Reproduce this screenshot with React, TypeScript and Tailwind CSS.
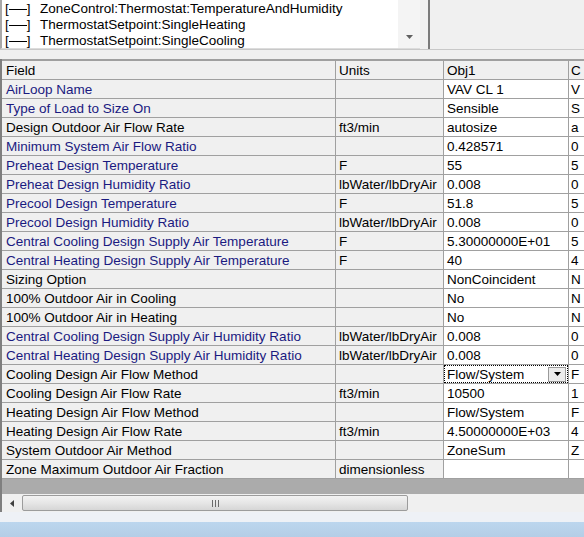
import React from "react";

type Row = { f: string; u: string; v: string; n: string; blue?: boolean; combo?: boolean };

const rows: Row[] = [
  { f: "AirLoop Name", u: "", v: "VAV CL 1", n: "V", blue: true },
  { f: "Type of Load to Size On", u: "", v: "Sensible", n: "S", blue: true },
  { f: "Design Outdoor Air Flow Rate", u: "ft3/min", v: "autosize", n: "a" },
  { f: "Minimum System Air Flow Ratio", u: "", v: "0.428571", n: "0", blue: true },
  { f: "Preheat Design Temperature", u: "F", v: "55", n: "5", blue: true },
  { f: "Preheat Design Humidity Ratio", u: "lbWater/lbDryAir", v: "0.008", n: "0", blue: true },
  { f: "Precool Design Temperature", u: "F", v: "51.8", n: "5", blue: true },
  { f: "Precool Design Humidity Ratio", u: "lbWater/lbDryAir", v: "0.008", n: "0", blue: true },
  { f: "Central Cooling Design Supply Air Temperature", u: "F", v: "5.30000000E+01", n: "5", blue: true },
  { f: "Central Heating Design Supply Air Temperature", u: "F", v: "40", n: "4", blue: true },
  { f: "Sizing Option", u: "", v: "NonCoincident", n: "N" },
  { f: "100% Outdoor Air in Cooling", u: "", v: "No", n: "N" },
  { f: "100% Outdoor Air in Heating", u: "", v: "No", n: "N" },
  { f: "Central Cooling Design Supply Air Humidity Ratio", u: "lbWater/lbDryAir", v: "0.008", n: "0", blue: true },
  { f: "Central Heating Design Supply Air Humidity Ratio", u: "lbWater/lbDryAir", v: "0.008", n: "0", blue: true },
  { f: "Cooling Design Air Flow Method", u: "", v: "Flow/System", n: "F", combo: true },
  { f: "Cooling Design Air Flow Rate", u: "ft3/min", v: "10500", n: "1" },
  { f: "Heating Design Air Flow Method", u: "", v: "Flow/System", n: "F" },
  { f: "Heating Design Air Flow Rate", u: "ft3/min", v: "4.50000000E+03", n: "4" },
  { f: "System Outdoor Air Method", u: "", v: "ZoneSum", n: "Z" },
  { f: "Zone Maximum Outdoor Air Fraction", u: "dimensionless", v: "", n: "" },
];

const listItems = [
  "ZoneControl:Thermostat:TemperatureAndHumidity",
  "ThermostatSetpoint:SingleHeating",
  "ThermostatSetpoint:SingleCooling",
];

export default function App() {
  return (
    <div
      className="w-[584px] h-[537px] overflow-hidden bg-[#f0f0f0] text-[13.5px] text-black relative"
      style={{ fontFamily: '"Liberation Sans", Arial, sans-serif' }}
    >
      {/* top area */}
      <div className="h-[49px] flex">
        <div className="w-[420px] h-[49px] flex bg-white border-l-2 border-[#a8a8a8] border-b border-b-[#dcdcdc]">
          <div className="flex-1 flex flex-col pt-[1px]">
            {listItems.map((t, i) => (
              <div key={i} className="h-[16px] leading-[16px] flex items-center pl-[3px]">
                <span className="w-[35px] flex items-center">
                  <span>[</span>
                  <span className="w-[18px] h-[1px] bg-black mt-[1px]" />
                  <span>]</span>
                </span>
                <span className="whitespace-nowrap">{t}</span>
              </div>
            ))}
          </div>
          <div className="w-[22px] bg-[#f4f4f4] flex items-end justify-center pb-[9px]">
            <svg width="7" height="4" viewBox="0 0 7 4">
              <polygon points="0,0 7,0 3.5,4" fill="#606060" />
            </svg>
          </div>
        </div>
        <div className="w-[8px]" />
        <div className="w-[2px] h-[49px] bg-[#7a7a7a]" />
        <div className="flex-1" />
      </div>
      <div className="h-[1px] bg-[#c8c8c8]" />
      <div className="h-[9px]" />

      {/* grid */}
      <div className="border-l-2 border-[#7f7f7f]">
        <div className="border-t-2 border-[#a0a0a0]">
          <div className="flex h-[19px] border-b border-[#a0a0a0] bg-[#f0f0f0]">
            <div className="w-[334px] shrink-0 border-r border-[#a0a0a0] pl-[4px] leading-[19px]">Field</div>
            <div className="w-[108px] shrink-0 border-r border-[#a0a0a0] pl-[3px] leading-[19px]">Units</div>
            <div className="w-[125px] shrink-0 border-r border-[#a0a0a0] pl-[3px] leading-[19px]">Obj1</div>
            <div className="flex-1 pl-[2px] leading-[19px]">C</div>
          </div>
          {rows.map((r, i) => (
            <div key={i} className="flex h-[19px] border-b border-[#a0a0a0]">
              <div
                className={`w-[334px] shrink-0 border-r border-[#a0a0a0] bg-[#f0f0f0] pl-[4px] leading-[19px] whitespace-nowrap ${r.blue ? "text-[#1a1a80]" : "text-black"}`}
              >
                {r.f}
              </div>
              <div className="w-[108px] shrink-0 border-r border-[#a0a0a0] bg-[#f0f0f0] pl-[3px] leading-[19px] whitespace-nowrap">
                {r.u}
              </div>
              {r.combo ? (
                <div className="w-[125px] shrink-0 border-r border-[#a0a0a0] bg-white relative">
                  <div className="absolute inset-0 border border-dotted border-black flex items-center">
                    <span className="pl-[2px] leading-[17px] flex-1">{r.v}</span>
                    <div className="w-[18px] h-[15px] mr-[1px] bg-[#ececec] border border-[#9a9a9a] flex items-center justify-center">
                      <svg width="7" height="4" viewBox="0 0 7 4">
                        <polygon points="0,0 7,0 3.5,4" fill="#000" />
                      </svg>
                    </div>
                  </div>
                </div>
              ) : (
                <div className="w-[125px] shrink-0 border-r border-[#a0a0a0] bg-white pl-[3px] leading-[19px] whitespace-nowrap">
                  {r.v}
                </div>
              )}
              <div className="flex-1 bg-white pl-[2px] leading-[19px] overflow-hidden">{r.n}</div>
            </div>
          ))}
          <div className="h-[15px] bg-[#ababab]" />
          {/* horizontal scrollbar */}
          <div className="h-[18px] flex items-center bg-[#f0f0f0]">
            <div className="w-[20px] flex items-center justify-center">
              <svg width="4" height="7" viewBox="0 0 4 7">
                <polygon points="4,0 4,7 0,3.5" fill="#404040" />
              </svg>
            </div>
            <div className="w-[386px] h-[16px] rounded-[2px] border border-[#9c9c9c] bg-gradient-to-b from-[#f2f2f2] via-[#e6e6e6] to-[#d6d6d6] flex items-center justify-center">
              <div className="flex gap-[2px]">
                <div className="w-[1px] h-[7px] bg-[#6a6a6a]" />
                <div className="w-[1px] h-[7px] bg-[#6a6a6a]" />
                <div className="w-[1px] h-[7px] bg-[#6a6a6a]" />
              </div>
            </div>
          </div>
        </div>
      </div>
      <div className="h-[10px] bg-[#eef1f6]" />
      <div className="h-[16px] bg-gradient-to-b from-[#bcd6ee] to-[#b4cde6]" />
    </div>
  );
}
